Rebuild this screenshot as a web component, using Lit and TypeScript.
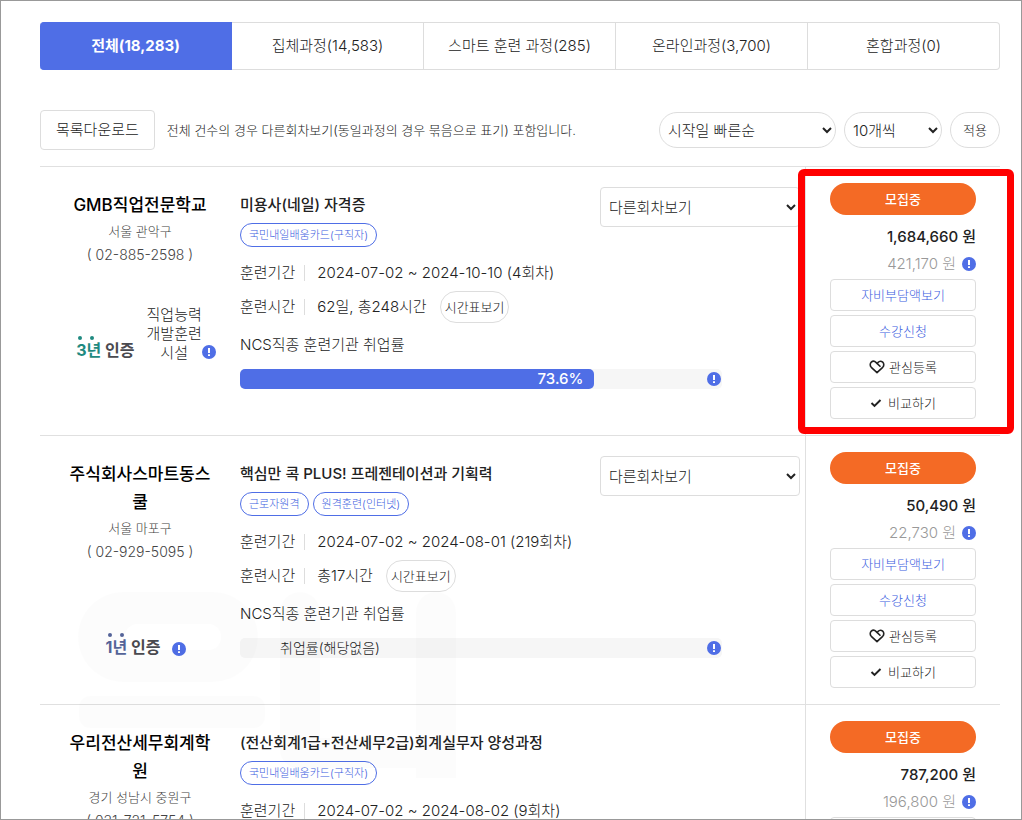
import { LitElement, html, css, svg, nothing } from "lit";
import { customElement, property } from "lit/decorators.js";

interface Course {
  school: string;
  region: string;
  phone: string;
  certYears: number;
  facility: string[];
  title: string;
  tags: string[];
  period: string;
  hours: string;
  rate: number | null;
  price: string;
  selfPrice: string;
  rounds: boolean;
  marked?: boolean;
}

const TABS = [
  "전체(18,283)",
  "집체과정(14,583)",
  "스마트 훈련 과정(285)",
  "온라인과정(3,700)",
  "혼합과정(0)",
];

const COURSES: Course[] = [
  {
    school: "GMB직업전문학교",
    region: "서울 관악구",
    phone: "( 02-885-2598 )",
    certYears: 3,
    facility: ["직업능력", "개발훈련", "시설"],
    title: "미용사(네일) 자격증",
    tags: ["국민내일배움카드(구직자)"],
    period: "2024-07-02 ~ 2024-10-10 (4회차)",
    hours: "62일, 총248시간",
    rate: 73.6,
    price: "1,684,660 원",
    selfPrice: "421,170 원",
    rounds: true,
    marked: true,
  },
  {
    school: "주식회사스마트동스쿨",
    region: "서울 마포구",
    phone: "( 02-929-5095 )",
    certYears: 1,
    facility: [],
    title: "핵심만 콕 PLUS! 프레젠테이션과 기획력",
    tags: ["근로자원격", "원격훈련(인터넷)"],
    period: "2024-07-02 ~ 2024-08-01 (219회차)",
    hours: "총17시간",
    rate: null,
    price: "50,490 원",
    selfPrice: "22,730 원",
    rounds: true,
  },
  {
    school: "우리전산세무회계학원",
    region: "경기 성남시 중원구",
    phone: "( 031-721-5754 )",
    certYears: 0,
    facility: [],
    title: "(전산회계1급+전산세무2급)회계실무자 양성과정",
    tags: ["국민내일배움카드(구직자)"],
    period: "2024-07-02 ~ 2024-08-02 (9회차)",
    hours: "",
    rate: null,
    price: "787,200 원",
    selfPrice: "196,800 원",
    rounds: false,
  },
];

const infoIcon = html`<svg class="info" viewBox="0 0 14 14" role="img" aria-label="안내">
  ${svg`<circle cx="7" cy="7" r="7" fill="#4f6ee6"/><path d="M6 3h2v5H6zM6 9.2h2v1.9H6z" fill="#fff"/>`}
</svg>`;

const heartIcon = html`<svg class="heart" viewBox="0 0 16 14" aria-hidden="true">
  ${svg`<path d="M11 6.300L7.200 2.600C5.800 1.200 3.700.900 2.300 2.200.800 3.600.900 5.900 2.300 7.300L8 12.700l5.700-5.400c1.400-1.400 1.500-3.700 0-5.100-1.500-1.300-3.500-1-4.900.400L7.900 3.400" fill="none" stroke="#222" stroke-width="1.600" stroke-linecap="round" stroke-linejoin="round"/>`}
</svg>`;

const checkIcon = html`<svg class="check" viewBox="0 0 12 10" aria-hidden="true">
  ${svg`<path d="M1.500 5l3 2.900L10.500 2" fill="none" stroke="#222" stroke-width="2"/>`}
</svg>`;

@customElement("course-row")
export class CourseRow extends LitElement {
  @property({ attribute: false }) course!: Course;

  static styles = css`
    :host {
      display: grid;
      grid-template-columns: 200px minmax(0, 1fr) 195px;
      border-bottom: 1px solid #e0e0e0;
      color: #222;
      font-size: 15px;
      line-height: 24px;
    }
    button,
    select {
      font: inherit;
      color: inherit;
      background: #fff;
      border: 1px solid #ddd;
      margin: 0;
      cursor: pointer;
    }
    .school {
      padding: 24px 24px 0;
      text-align: center;
    }
    .name {
      margin: 0;
      color: #000;
      font-size: 17px;
      font-weight: 500;
      line-height: 28px;
      word-break: break-all;
    }
    .sub {
      margin: 0;
      color: #444;
      font-size: 13px;
    }
    .phone {
      font-size: 14px;
    }
    .cert {
      display: flex;
      justify-content: center;
      align-items: flex-end;
      min-height: 57px;
      margin-top: 38px;
      padding-left: 12px;
    }
    .years {
      display: flex;
      flex-direction: column;
      margin-bottom: 2px;
      color: #4a4a4f;
      font-size: 16px;
      font-weight: 700;
      line-height: 20px;
      white-space: nowrap;
      text-align: left;
    }
    .years svg {
      width: 22px;
      height: 4px;
    }
    .num3 {
      color: #1f8a80;
    }
    .num1 {
      color: #55659a;
    }
    .facility {
      margin-left: 12px;
      line-height: 19px;
    }
    .facility span {
      display: block;
    }
    .info {
      flex: none;
      width: 14px;
      height: 14px;
    }
    .cert .info {
      margin-bottom: 3px;
    }
    .cert.plain .info {
      margin-left: 12px;
    }
    .detail {
      padding: 20px 5px 0 0;
    }
    .head {
      display: flex;
      justify-content: space-between;
      align-items: flex-start;
    }
    .title {
      margin: 6px 0;
      font-size: 15px;
      font-weight: 500;
      line-height: 24px;
    }
    .tags {
      display: flex;
      gap: 4px;
      margin-bottom: 9px;
    }
    .tag {
      height: 24px;
      box-sizing: border-box;
      border: 1px solid #4f6ee6;
      border-radius: 12px;
      padding: 0 8px;
      color: #3d5ee0;
      font-size: 11px;
      line-height: 22px;
      white-space: nowrap;
    }
    .line {
      display: flex;
      align-items: center;
      height: 34px;
      white-space: nowrap;
    }
    .label {
      border-right: 1px solid #ddd;
      padding-right: 9px;
      margin-right: 12px;
      line-height: 16px;
    }
    .round {
      height: 32px;
      border-radius: 16px;
      padding: 0 4px;
      margin-left: 13px;
      font-size: 13px;
    }
    .ncs {
      margin: 9px 0 12px;
    }
    .bar {
      display: flex;
      align-items: center;
      justify-content: space-between;
      width: 86%;
      height: 20px;
      border-radius: 5px;
      background: #f6f6f6;
    }
    .fill {
      box-sizing: border-box;
      padding-right: 11px;
      border-radius: 5px;
      background: #4f6ee6;
      color: #fff;
      font-weight: 500;
      line-height: 20px;
      text-align: right;
    }
    .none {
      padding-left: 40px;
      font-size: 14px;
      line-height: 20px;
    }
    .bar .info {
      margin-right: 1px;
    }
    .other {
      width: 200px;
      height: 40px;
      border-radius: 4px;
      padding: 0 4px;
    }
    .side {
      position: relative;
      display: flex;
      flex-direction: column;
      gap: 4px;
      border-left: 1px solid #e0e0e0;
      padding: 16px 24px;
    }
    .state {
      border-radius: 16px;
      background: #f46a25;
      color: #fff;
      font-size: 13px;
      font-weight: 500;
      line-height: 32px;
      text-align: center;
    }
    .prices {
      box-sizing: border-box;
      height: 56px;
      padding-top: 4px;
      text-align: right;
      line-height: 28px;
      white-space: nowrap;
    }
    .price {
      font-weight: 500;
    }
    .self {
      display: flex;
      justify-content: flex-end;
      align-items: center;
      gap: 6px;
      color: #999;
      line-height: 26px;
    }
    .act {
      display: flex;
      align-items: center;
      justify-content: center;
      gap: 4px;
      height: 32px;
      border-radius: 4px;
      padding: 0;
      font-size: 13px;
    }
    .blue {
      color: #3d5ee0;
    }
    .heart {
      width: 16px;
      height: 14px;
    }
    .check {
      width: 12px;
      height: 10px;
      margin-right: 2px;
    }
    .mark {
      position: absolute;
      inset: 2px -14px 1px -8px;
      border: 7px solid #ff0000;
      border-radius: 6px;
      pointer-events: none;
    }
  `;

  private cert(c: Course) {
    if (!c.certYears) return nothing;
    const dot = c.certYears === 3 ? "#1f8a80" : "#55659a";
    return html`
      <div class="cert ${c.facility.length ? "" : "plain"}">
        <div class="years">
          <svg viewBox="0 0 22 4" aria-hidden="true">
            <circle cx="4" cy="2" r="2" fill=${dot} />
            <circle cx="16" cy="2" r="2" fill=${dot} />
          </svg>
          <div><span class="num${c.certYears}">${c.certYears}년</span> 인증</div>
        </div>
        ${c.facility.length
          ? html`<div class="facility">${c.facility.map((t) => html`<span>${t}</span>`)}</div>`
          : nothing}
        ${infoIcon}
      </div>
    `;
  }

  private stats(c: Course) {
    if (!c.hours) return nothing;
    return html`
      <div class="line">
        <span class="label">훈련시간</span>${c.hours}
        <button class="round">시간표보기</button>
      </div>
      <div class="ncs">NCS직종 훈련기관 취업률</div>
      <div class="bar">
        ${c.rate === null
          ? html`<span class="none">취업률(해당없음)</span>`
          : html`<div class="fill" style="width:${c.rate}%">${c.rate}%</div>`}
        ${infoIcon}
      </div>
    `;
  }

  render() {
    const c = this.course;
    return html`
      <div class="school">
        <h3 class="name">${c.school}</h3>
        <p class="sub">${c.region}</p>
        <p class="sub phone">${c.phone}</p>
        ${this.cert(c)}
      </div>
      <div class="detail">
        <div class="head">
          <div>
            <h3 class="title">${c.title}</h3>
            <div class="tags">${c.tags.map((t) => html`<span class="tag">${t}</span>`)}</div>
          </div>
          ${c.rounds
            ? html`<select class="other" aria-label="다른회차보기">
                <option>다른회차보기</option>
              </select>`
            : nothing}
        </div>
        <div class="line"><span class="label">훈련기간</span>${c.period}</div>
        ${this.stats(c)}
      </div>
      <div class="side">
        <div class="state">모집중</div>
        <div class="prices">
          <div class="price">${c.price}</div>
          <div class="self">${c.selfPrice}${infoIcon}</div>
        </div>
        <button class="act blue">자비부담액보기</button>
        <button class="act blue">수강신청</button>
        <button class="act">${heartIcon}관심등록</button>
        <button class="act">${checkIcon}비교하기</button>
        ${c.marked ? html`<div class="mark"></div>` : nothing}
      </div>
    `;
  }
}

@customElement("app-root")
export class AppRoot extends LitElement {
  static styles = css`
    :host {
      display: block;
      position: relative;
      box-sizing: border-box;
      height: 100vh;
      overflow: hidden;
      border: 1px solid #999;
      padding: 21px 21px 0 39px;
      background: #fff;
      color: #222;
      font-family: Inter, "Noto Sans CJK KR", sans-serif;
      font-size: 15px;
      line-height: 24px;
      font-weight: 300;
    }
    button,
    select {
      font: inherit;
      color: inherit;
      background: #fff;
      border: 1px solid #ddd;
      margin: 0;
      cursor: pointer;
    }
    .tabs {
      display: grid;
      grid-template-columns: repeat(5, 1fr);
      height: 48px;
    }
    .tab {
      border-left-width: 0;
      padding: 0;
      white-space: nowrap;
    }
    .tab.on {
      border-color: #4f6ee6;
      border-radius: 4px 0 0 4px;
      background: #4f6ee6;
      color: #fff;
      font-weight: 700;
    }
    .tab:last-child {
      border-radius: 0 4px 4px 0;
    }
    .tools {
      display: flex;
      align-items: center;
      gap: 8px;
      margin: 40px 0 16px;
    }
    .down {
      height: 40px;
      border-radius: 4px;
      padding: 0 15px;
    }
    .note {
      flex: 1;
      margin: 0 0 0 4px;
      font-size: 13px;
      white-space: nowrap;
    }
    .pill {
      height: 36px;
      border-radius: 18px;
      padding: 0 4px;
    }
    .sort {
      width: 177px;
    }
    .count {
      width: 98px;
    }
    .apply {
      width: 50px;
      font-size: 13px;
    }
    .list {
      border-top: 1px solid #e0e0e0;
    }
    .watermark {
      position: absolute;
      left: 77px;
      top: 591px;
      width: 380px;
      height: 186px;
      pointer-events: none;
    }
  `;

  render() {
    return html`
      <nav class="tabs">
        ${TABS.map((t, i) => html`<button class="tab ${i === 0 ? "on" : ""}">${t}</button>`)}
      </nav>
      <div class="tools">
        <button class="down">목록다운로드</button>
        <p class="note">전체 건수의 경우 다른회차보기(동일과정의 경우 묶음으로 표기) 포함입니다.</p>
        <select class="pill sort" aria-label="정렬"><option>시작일 빠른순</option></select>
        <select class="pill count" aria-label="표시 개수"><option>10개씩</option></select>
        <button class="pill apply">적용</button>
      </div>
      <div class="list">
        ${COURSES.map((c) => html`<course-row .course=${c}></course-row>`)}
      </div>
      <svg class="watermark" viewBox="0 0 380 186" fill="#000" fill-opacity="0.01" aria-hidden="true">
        <path
          fill-rule="evenodd"
          d="M45 0h90a45 45 0 0 1 0 90H45a45 45 0 0 1 0-90zM60 32a13 13 0 0 0 0 26h70a13 13 0 0 0 0-26z"
        />
        <path d="M12 104h164a11 11 0 0 1 11 11v10a11 11 0 0 1-11 11H12a11 11 0 0 1-11-11v-10a11 11 0 0 1 11-11z" />
        <path d="M202 20a18 18 0 0 1 40 0v126h96V20a18 18 0 0 1 40 0v166h-40v-10H220a18 18 0 0 1-18-18z" />
      </svg>
    `;
  }
}
